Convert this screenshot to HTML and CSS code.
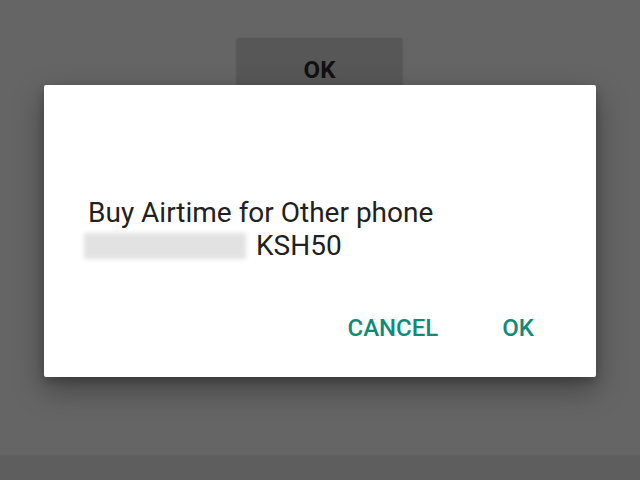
FILE: index.html
```html
<!DOCTYPE html>
<html>
<head>
<meta charset="utf-8">
<link rel="stylesheet" href="styles.css">
</head>
<body>
<div class="screen">
  <div class="page">
    <div class="top-area">
      <div class="bg-button">OK</div>
    </div>
    <div class="bottom-bar"></div>
  </div>
  <div class="dialog">
    <div class="message">
      <div>Buy Airtime for Other phone</div>
      <div class="line2"><span class="blurred"></span><span>KSH50</span></div>
    </div>
    <div class="actions">
      <span class="btn">CANCEL</span>
      <span class="btn">OK</span>
    </div>
  </div>
</div>
</body>
</html>
```
FILE: styles.css
```css
html, body {
  margin: 0;
  padding: 0;
}
body {
  width: 640px;
  height: 480px;
  overflow: hidden;
  font-family: Roboto, "Noto Sans", sans-serif;
  background: #666666;
}
.screen {
  position: relative;
  width: 640px;
  height: 480px;
}
.page {
  display: flex;
  flex-direction: column;
  height: 480px;
}
.top-area {
  flex: 1;
  display: flex;
  justify-content: flex-start;
  padding-top: 38px;
  padding-left: 237px;
  background: #656565;
}
.bg-button {
  width: 165px;
  height: 80px;
  background: #575757;
  border-radius: 2px;
  box-shadow: 0 1px 3px rgba(0,0,0,0.25);
  display: flex;
  justify-content: center;
  padding-top: 18px;
  box-sizing: border-box;
  font-weight: 700;
  font-size: 24px;
  line-height: 28px;
  color: #111;
}
.bottom-bar {
  height: 24px;
  background: #5e5e5e;
  border-top: 1px solid #626262;
}
.dialog {
  position: absolute;
  left: 44px;
  top: 85px;
  width: 552px;
  height: 292px;
  background: #ffffff;
  border-radius: 2px;
  box-shadow: 0 12px 30px rgba(0,0,0,0.35), 0 4px 10px rgba(0,0,0,0.2);
  box-sizing: border-box;
  padding: 111px 44px 0 44px;
  display: flex;
  flex-direction: column;
}
.message {
  font-size: 28px;
  line-height: 33px;
  color: #212121;
}
.line2 {
  display: flex;
  align-items: center;
  gap: 10px;
}
.blurred {
  display: inline-block;
  width: 162px;
  height: 26px;
  margin-left: -4px;
  background: #e2e2e2;
  filter: blur(2px);
}
.actions {
  display: flex;
  justify-content: flex-end;
  gap: 64px;
  margin-top: 52px;
  padding-right: 18px;
}
.btn {
  font-size: 24px;
  line-height: 28px;
  font-weight: 500;
  color: #128a7a;
}
```
